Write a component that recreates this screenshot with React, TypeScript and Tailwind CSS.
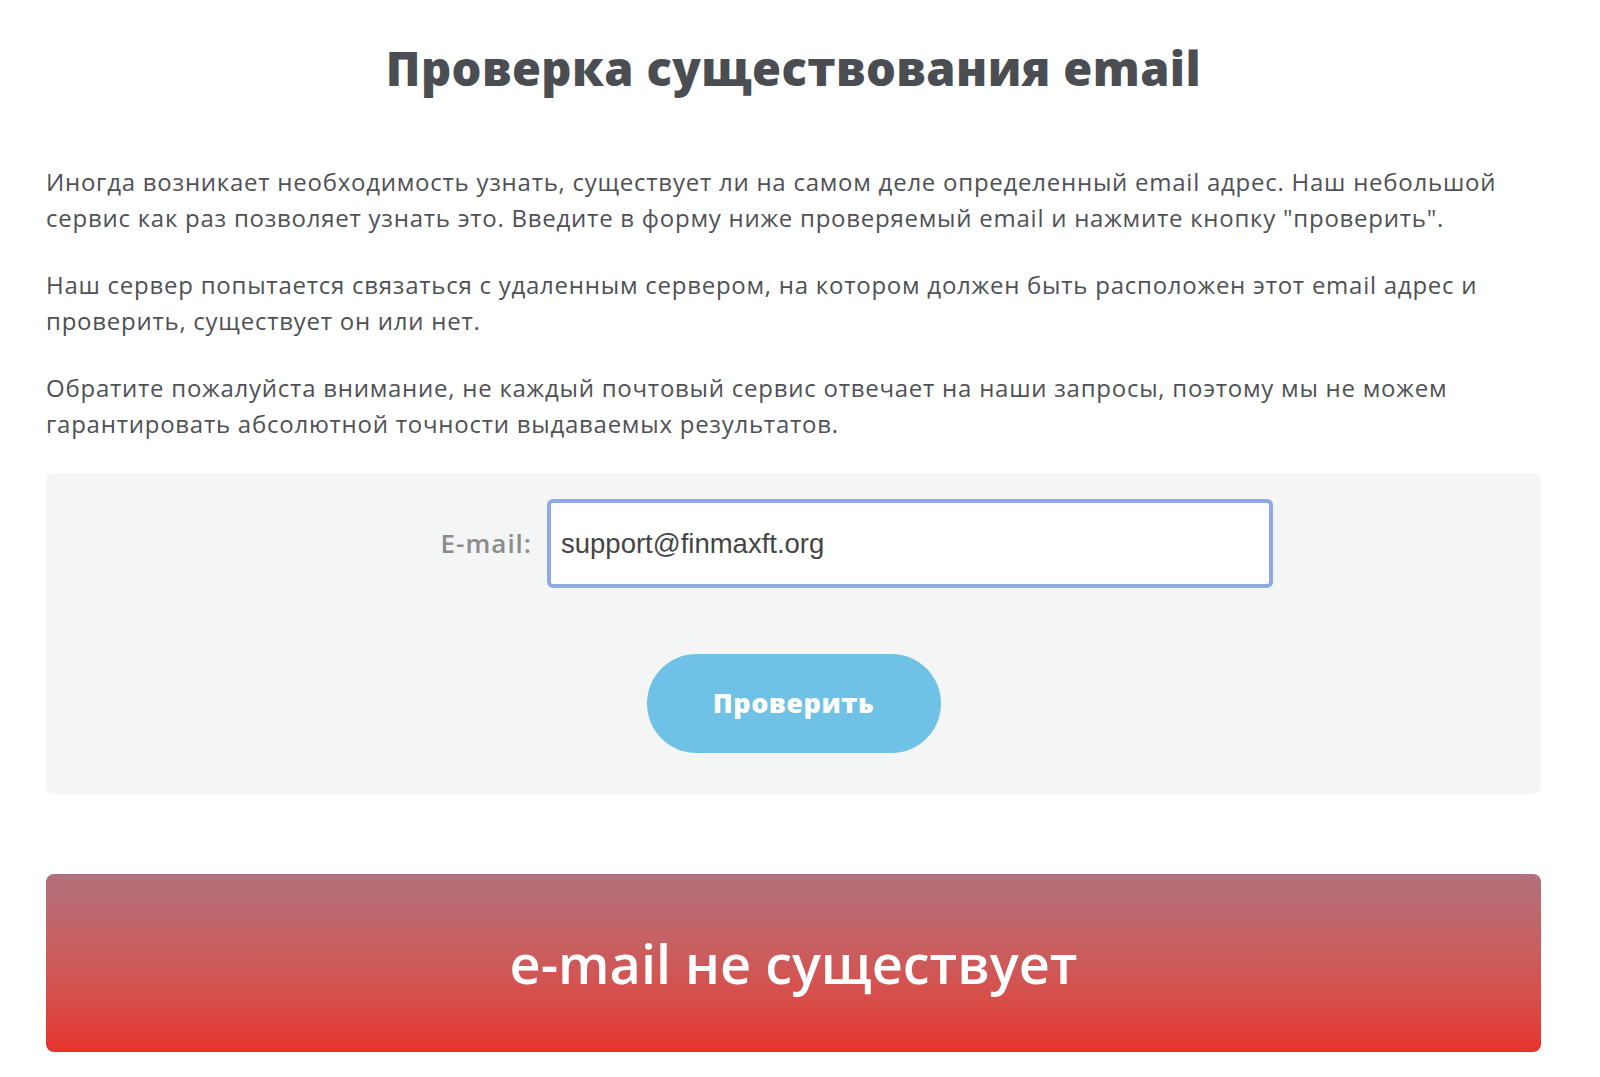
export default function App() {
  return (
    <div className="min-h-screen bg-white pl-[46px] pr-[59px] pb-[25px] font-['Open_Sans',sans-serif]">
      {/* Heading */}
      <div className="flex h-[136px] items-center justify-center">
        <h1 className="text-[47px] font-extrabold leading-none tracking-[0.4px] text-[#4a4d52]">
          Проверка существования email
        </h1>
      </div>

      {/* Description */}
      <div className="mt-[28px] text-[24px] leading-[35.5px] tracking-[0.75px] text-[#4f5155] whitespace-nowrap">
        <p className="mb-[32px]">
          Иногда возникает необходимость узнать, существует ли на самом деле определенный email адрес. Наш небольшой
          <br />
          сервис как раз позволяет узнать это. Введите в форму ниже проверяемый email и нажмите кнопку "проверить".
        </p>
        <p className="mb-[32px]">
          Наш сервер попытается связаться с удаленным сервером, на котором должен быть расположен этот email адрес и
          <br />
          проверить, существует он или нет.
        </p>
        <p>
          Обратите пожалуйста внимание, не каждый почтовый сервис отвечает на наши запросы, поэтому мы не можем
          <br />
          гарантировать абсолютной точности выдаваемых результатов.
        </p>
      </div>

      {/* Form */}
      <div className="mt-[32px] h-[321px] rounded-lg bg-[#f4f5f5] pt-[26px]">
        <div className="flex items-center">
          <label className="w-[501px] pr-[15px] text-right text-[26px] font-semibold tracking-[1px] text-[#8c8c8c]">
            E-mail:
          </label>
          <input
            type="text"
            defaultValue="support@finmaxft.org"
            className="h-[89px] w-[726px] rounded-md border-4 border-[#8fa9e6] bg-white px-[10px] font-['Liberation_Sans',sans-serif] text-[27.5px] text-[#454545] outline-none"
          />
        </div>
        <div className="mt-[66px] flex justify-center">
          <button className="h-[99px] w-[294px] rounded-full bg-[#6fc1e6] text-[27px] font-extrabold tracking-[0.5px] text-white">
            Проверить
          </button>
        </div>
      </div>

      {/* Result */}
      <div className="mt-[80px] flex h-[178px] items-center justify-center rounded-lg bg-gradient-to-b from-[#b2717c] to-[#e6322c]">
        <span className="text-[54px] font-semibold text-white">e-mail не существует</span>
      </div>
    </div>
  );
}
